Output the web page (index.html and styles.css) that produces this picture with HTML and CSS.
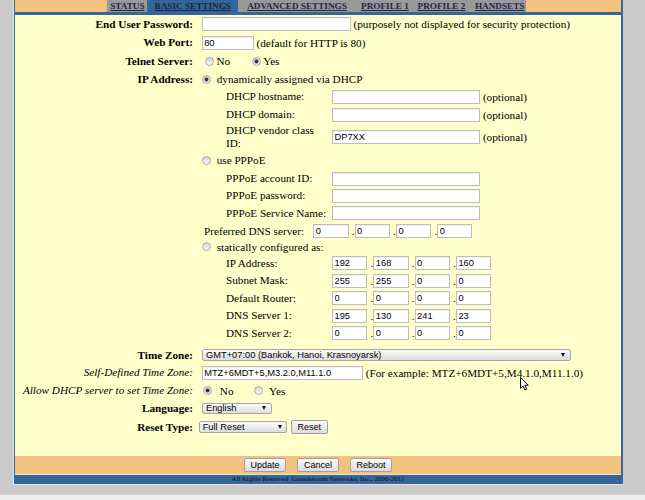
FILE: index.html
```html
<!DOCTYPE html>
<html>
<head>
<meta charset="utf-8">
<title>Basic Settings</title>
<link rel="stylesheet" href="styles.css">
</head>
<body>
<div class="page">
  <div class="frame">
    <div class="tabbar">
      <nav class="tabs">
        <a class="tab t1" href="#">STATUS</a>
        <a class="tab t2 active" href="#">BASIC SETTINGS</a>
        <a class="tab t3" href="#">ADVANCED SETTINGS</a>
        <a class="tab t4" href="#">PROFILE 1</a>
        <a class="tab t5" href="#">PROFILE 2</a>
        <a class="tab t6" href="#">HANDSETS</a>
      </nav>
    </div>

    <div class="content">
      <div class="row h18">
        <div class="lbl">End User Password:</div>
        <div class="val"><input class="txt w149" type="password"><span class="note">(purposely not displayed for security protection)</span></div>
      </div>
      <div class="row h19">
        <div class="lbl">Web Port:</div>
        <div class="val"><input class="txt w52" type="text" value="80"><span class="note">(default for HTTP is 80)</span></div>
      </div>
      <div class="row h18">
        <div class="lbl">Telnet Server:</div>
        <div class="val opts tel">
          <label class="opt"><input class="radio" type="radio" name="telnet">No</label>
          <label class="opt"><input class="radio" type="radio" name="telnet" checked>Yes</label>
        </div>
      </div>

      <div class="row block">
        <div class="lbl">IP Address:</div>
        <div class="val stack">
          <label class="sub h18 opt dyn"><input class="radio" type="radio" name="ip" checked>dynamically assigned via DHCP</label>
          <div class="sub ind h18"><span class="sublbl">DHCP hostname:</span><input class="txt w148" type="text"><span class="note">(optional)</span></div>
          <div class="sub ind h18"><span class="sublbl">DHCP domain:</span><input class="txt w148" type="text"><span class="note">(optional)</span></div>
          <div class="sub ind h26"><span class="sublbl">DHCP vendor class<br>ID:</span><input class="txt w148" type="text" value="DP7XX"><span class="note">(optional)</span></div>

          <label class="sub h20 opt dyn"><input class="radio" type="radio" name="ip">use PPPoE</label>
          <div class="sub ind h17"><span class="sublbl">PPPoE account ID:</span><input class="txt w148" type="text"></div>
          <div class="sub ind h175"><span class="sublbl">PPPoE password:</span><input class="txt w148" type="password"></div>
          <div class="sub ind h175"><span class="sublbl">PPPoE Service Name:</span><input class="txt w148" type="text"></div>
          <div class="sub pref h17"><span class="preflbl">Preferred DNS server:</span>
            <span class="quad"><input class="txt w35" type="text" value="0"><span class="dot">.</span><input class="txt w35" type="text" value="0"><span class="dot">.</span><input class="txt w35" type="text" value="0"><span class="dot">.</span><input class="txt w35" type="text" value="0"></span>
          </div>

          <label class="sub h155 opt dyn"><input class="radio" type="radio" name="ip">statically configured as:</label>
          <div class="sub ind h175"><span class="sublbl">IP Address:</span>
            <span class="quad"><input class="txt w35" type="text" value="192"><span class="dot">.</span><input class="txt w35" type="text" value="168"><span class="dot">.</span><input class="txt w35" type="text" value="0"><span class="dot">.</span><input class="txt w35" type="text" value="160"></span>
          </div>
          <div class="sub ind h175"><span class="sublbl">Subnet Mask:</span>
            <span class="quad"><input class="txt w35" type="text" value="255"><span class="dot">.</span><input class="txt w35" type="text" value="255"><span class="dot">.</span><input class="txt w35" type="text" value="0"><span class="dot">.</span><input class="txt w35" type="text" value="0"></span>
          </div>
          <div class="sub ind h175"><span class="sublbl">Default Router:</span>
            <span class="quad"><input class="txt w35" type="text" value="0"><span class="dot">.</span><input class="txt w35" type="text" value="0"><span class="dot">.</span><input class="txt w35" type="text" value="0"><span class="dot">.</span><input class="txt w35" type="text" value="0"></span>
          </div>
          <div class="sub ind h175"><span class="sublbl">DNS Server 1:</span>
            <span class="quad"><input class="txt w35" type="text" value="195"><span class="dot">.</span><input class="txt w35" type="text" value="130"><span class="dot">.</span><input class="txt w35" type="text" value="241"><span class="dot">.</span><input class="txt w35" type="text" value="23"></span>
          </div>
          <div class="sub ind h175"><span class="sublbl">DNS Server 2:</span>
            <span class="quad"><input class="txt w35" type="text" value="0"><span class="dot">.</span><input class="txt w35" type="text" value="0"><span class="dot">.</span><input class="txt w35" type="text" value="0"><span class="dot">.</span><input class="txt w35" type="text" value="0"></span>
          </div>
        </div>
      </div>

      <div class="row h18 gap-top">
        <div class="lbl">Time Zone:</div>
        <div class="val"><div class="select tz"><span>GMT+07:00 (Bankok, Hanoi, Krasnoyarsk)</span><span class="caret"></span></div></div>
      </div>
      <div class="row h175">
        <div class="lbl it">Self-Defined Time Zone:</div>
        <div class="val"><input class="txt w162" type="text" value="MTZ+6MDT+5,M3.2.0,M11.1.0"><span class="note">(For example: MTZ+6MDT+5,M4.1.0,M11.1.0)</span></div>
      </div>
      <div class="row h18">
        <div class="lbl it">Allow DHCP server to set Time Zone:</div>
        <div class="val opts allow">
          <label class="opt"><input class="radio" type="radio" name="dhcptz" checked>No</label>
          <label class="opt"><input class="radio" type="radio" name="dhcptz">Yes</label>
        </div>
      </div>
      <div class="row h175">
        <div class="lbl">Language:</div>
        <div class="val"><div class="select lang"><span>English</span><span class="caret"></span></div></div>
      </div>
      <div class="row h20">
        <div class="lbl">Reset Type:</div>
        <div class="val"><div class="select rtype"><span>Full Reset</span><span class="caret"></span></div><button class="btn reset" type="button">Reset</button></div>
      </div>
    </div>

    <div class="actions">
      <button class="btn" type="button">Update</button>
      <button class="btn" type="button">Cancel</button>
      <button class="btn" type="button">Reboot</button>
    </div>
    <div class="footer">All Rights Reserved&nbsp; Grandstream Networks, Inc., 2006-2011</div>
  </div>
</div>
<div class="strip"></div>

<svg class="cursor" width="10" height="14" viewBox="0 0 10 14" aria-hidden="true">
  <path d="M0.5 0.5 V11.3 L3.1 8.9 L4.9 12.9 L6.7 12.1 L4.9 8.2 H8.3 Z" fill="#fff" stroke="#000" stroke-width="1" stroke-linejoin="round"/>
</svg>
</body>
</html>
```
FILE: styles.css
```css
* { box-sizing: border-box; }

html, body { margin: 0; padding: 0; }

body {
  background: #cbcbcb;
  font-family: "Liberation Serif", "Times New Roman", serif;
  font-size: 11.2px;
  color: #000;
}

.page {
  margin-left: 13px;
  width: 610px;
  border-left: 1px solid #e4e4e4;
  border-bottom: 1px solid #e4e4e4;
}

.frame {
  border-left: 1px solid #36679a;
  border-right: 2px solid #36679a;
}

/* ---------- tabs ---------- */
.tabbar {
  height: 15px;
  background: #f2c37e;
  border-bottom: 3px solid #336699;
}

.tabs {
  display: flex;
  height: 12px;
  margin-left: 92.3px;
}

.tab {
  display: block;
  height: 12px;
  padding-top: 1px;
  line-height: 11px;
  font-size: 9.2px;
  font-weight: bold;
  color: #1d2447;
  text-decoration: underline;
  text-align: center;
  white-space: nowrap;
  background: #999999;
}

.tab.active { background: #336699; }

.t1 { width: 40.2px; }
.t2 { width: 90.5px; }
.t3 { width: 118px; }
.t4 { width: 58px; }
.t5 { width: 55px; }
.t6 { width: 57px; text-align: right; padding-right: 1.5px; }

/* ---------- form ---------- */
.content {
  background: #ffffcc;
  padding-bottom: 18.7px;
}

.row {
  display: flex;
  align-items: center;
}

.row.block { align-items: flex-start; }
.row.gap-top { margin-top: 4px; }

.lbl {
  flex: 0 0 186px;
  padding-right: 8px;
  text-align: right;
  font-weight: bold;
  line-height: 13px;
  white-space: nowrap;
}

.row.block .lbl { line-height: 18px; }

.lbl.it {
  font-weight: normal;
  font-style: italic;
}

.val {
  display: flex;
  align-items: center;
  white-space: nowrap;
}

.val.stack {
  flex-direction: column;
  align-items: stretch;
  flex: 1;
}

.sub {
  display: flex;
  align-items: center;
}

.sub.ind { padding-left: 25px; }
.sub.pref { padding-left: 3px; }

.sublbl {
  flex: 0 0 106px;
  line-height: 13.3px;
}

.preflbl { flex: 0 0 109.3px; }

.h155 { height: 15.5px; }
.h17 { height: 17px; }
.h175 { height: 17.5px; }
.h18 { height: 18px; }
.h19 { height: 19px; }
.h20 { height: 20px; }
.h26 { height: 26px; }

.note { margin-left: 2.5px; }

/* text inputs */
.txt {
  height: 14px;
  margin: 0;
  padding: 0 1.5px;
  border: 1px solid #bdbdbd;
  background: #fff;
  box-shadow: inset 0 1px 1px rgba(0, 0, 0, 0.06);
  font-family: "Liberation Sans", Arial, sans-serif;
  font-size: 9.3px;
  color: #000;
  outline: none;
}

.w149 { width: 149.3px; margin-left: 0.7px; }
.w52 { width: 52.3px; margin-left: 0.7px; }
.w148 { width: 148.4px; }
.w35 { width: 35.3px; }
.w162 { width: 161.6px; margin-left: 0.7px; }

.quad { display: flex; align-items: center; }

.dot {
  width: 6px;
  text-align: right;
}

/* radios */
.opt {
  display: flex;
  align-items: center;
}

.radio {
  -webkit-appearance: none;
  appearance: none;
  flex: none;
  margin: 0;
  width: 9px;
  height: 9px;
  border-radius: 50%;
  border: 1px solid #a9a9a9;
  background: linear-gradient(#d6d6d6, #f7f7f7);
}

.radio:checked {
  background:
    radial-gradient(circle, #3a3a3a 0 1.6px, rgba(58, 58, 58, 0) 2.4px),
    linear-gradient(#d6d6d6, #f7f7f7);
}

.dyn { padding-left: 0.7px; }
.dyn .radio { margin-right: 6px; }

.tel { padding-left: 4px; }
.tel .radio { margin-right: 2.5px; }
.tel .opt + .opt { margin-left: 21.5px; }

.allow { padding-left: 2.3px; }
.allow .radio { margin-right: 7.5px; }
.allow .opt + .opt { margin-left: 21px; }
.allow .opt + .opt .radio { margin-right: 5.5px; }

/* selects */
.select {
  display: flex;
  align-items: center;
  justify-content: space-between;
  height: 12.5px;
  padding: 0 4.5px 0 3.3px;
  border: 1px solid #a6a6a6;
  border-radius: 2px;
  background: linear-gradient(#fbfbfb, #dddddd);
  font-family: "Liberation Sans", Arial, sans-serif;
  font-size: 9.3px;
  color: #000;
  white-space: nowrap;
}

.caret {
  width: 0;
  height: 0;
  border-left: 2.5px solid transparent;
  border-right: 2.5px solid transparent;
  border-top: 4px solid #111;
}

.tz { width: 369.3px; margin-left: 0.7px; }
.lang { width: 70px; margin-left: 0.7px; height: 11.5px; }
.rtype { width: 88.3px; margin-left: -2px; height: 11.5px; padding-left: 2.7px; }

/* buttons */
.btn {
  height: 14px;
  margin: 0;
  padding: 0 5.5px;
  border: 1px solid #a0a0a0;
  border-radius: 2px;
  background: linear-gradient(#fbfbfb, #dcdcdc);
  font-family: "Liberation Sans", Arial, sans-serif;
  font-size: 9px;
  line-height: 12px;
  color: #000;
}

.btn.reset { margin-left: 3.7px; }

.actions {
  height: 18.6px;
  background: #f2c37e;
  display: flex;
  justify-content: center;
  align-items: center;
  gap: 11.5px;
}

.footer {
  height: 10px;
  border-top: 1px solid #efe4c8;
  background: #336699;
  font-size: 7px;
  line-height: 9px;
  text-align: center;
  color: #111;
  white-space: nowrap;
}

.strip {
  margin-top: 9.7px;
  height: 5px;
  background: #efefef;
}

.cursor {
  position: absolute;
  left: 520px;
  top: 377px;
}
```
